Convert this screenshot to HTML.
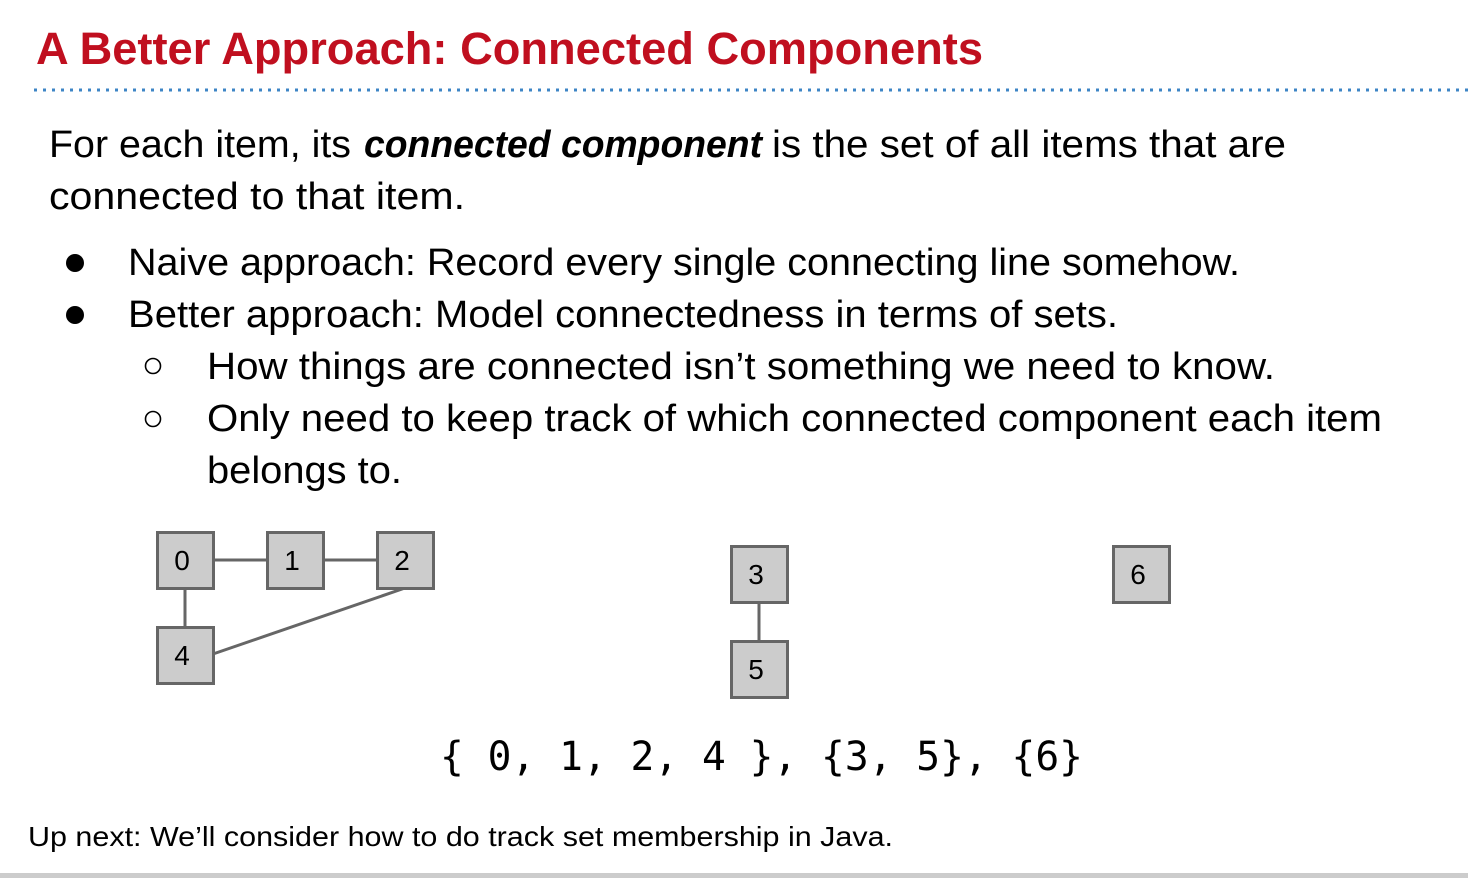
<!DOCTYPE html>
<html><head><meta charset="utf-8"><style>html,body{margin:0;padding:0;background:#fff;}svg{display:block}</style></head>
<body>
<svg width="1468" height="878" viewBox="0 0 1468 878" xmlns="http://www.w3.org/2000/svg">
<rect width="1468" height="878" fill="#fff"/>
<text x="36" y="64" font-family="Liberation Sans, sans-serif" font-weight="bold" font-size="45" fill="#c00f1f" textLength="947" lengthAdjust="spacingAndGlyphs">A Better Approach: Connected Components</text>
<line x1="34" y1="90" x2="1468" y2="90" stroke="#3d85c6" stroke-width="3" stroke-dasharray="3 6"/>
<g font-family="Liberation Sans, sans-serif" font-size="38" fill="#000">
<text x="49" y="157" textLength="302" lengthAdjust="spacingAndGlyphs">For each item, its</text>
<text x="364" y="157" font-weight="bold" font-style="italic" textLength="398" lengthAdjust="spacingAndGlyphs">connected component</text>
<text x="772" y="157" textLength="514" lengthAdjust="spacingAndGlyphs">is the set of all items that are</text>
<text x="49" y="209" textLength="416" lengthAdjust="spacingAndGlyphs">connected to that item.</text>
<text x="128" y="275" textLength="1112" lengthAdjust="spacingAndGlyphs">Naive approach: Record every single connecting line somehow.</text>
<text x="128" y="327" textLength="990" lengthAdjust="spacingAndGlyphs">Better approach: Model connectedness in terms of sets.</text>
<text x="207" y="379" textLength="1068" lengthAdjust="spacingAndGlyphs">How things are connected isn’t something we need to know.</text>
<text x="207" y="431" textLength="1175" lengthAdjust="spacingAndGlyphs">Only need to keep track of which connected component each item</text>
<text x="207" y="483" textLength="195" lengthAdjust="spacingAndGlyphs">belongs to.</text>
</g>
<circle cx="75" cy="263" r="9" fill="#000"/>
<circle cx="75" cy="315" r="9" fill="#000"/>
<circle cx="153" cy="366" r="7.5" fill="none" stroke="#000" stroke-width="1.6"/>
<circle cx="153" cy="419" r="7.5" fill="none" stroke="#000" stroke-width="1.6"/>
<g stroke="#666" stroke-width="3">
<line x1="213" y1="560" x2="267" y2="560"/>
<line x1="323" y1="560" x2="377" y2="560"/>
<line x1="185" y1="588" x2="185" y2="627"/>
<line x1="405" y1="588" x2="213" y2="654"/>
<line x1="759" y1="602" x2="759" y2="641"/>
</g>
<g fill="#ccc" stroke="#666" stroke-width="3">
<rect x="157.5" y="532.5" width="56" height="56"/>
<rect x="267.5" y="532.5" width="56" height="56"/>
<rect x="377.5" y="532.5" width="56" height="56"/>
<rect x="157.5" y="627.5" width="56" height="56"/>
<rect x="731.5" y="546.5" width="56" height="56"/>
<rect x="731.5" y="641.5" width="56" height="56"/>
<rect x="1113.5" y="546.5" width="56" height="56"/>
</g>
<g font-family="Liberation Sans, sans-serif" font-size="28" fill="#000" text-anchor="middle">
<text x="182" y="570">0</text>
<text x="292" y="570">1</text>
<text x="402" y="570">2</text>
<text x="182" y="665">4</text>
<text x="756" y="584">3</text>
<text x="756" y="679">5</text>
<text x="1138" y="584">6</text>
</g>
<text x="440" y="770" font-family="DejaVu Sans Mono, Liberation Mono, monospace" font-size="40" fill="#000" textLength="643" lengthAdjust="spacingAndGlyphs" xml:space="preserve">{ 0, 1, 2, 4 }, {3, 5}, {6}</text>
<text x="28" y="846" font-family="Liberation Sans, sans-serif" font-size="28" fill="#000" textLength="865" lengthAdjust="spacingAndGlyphs">Up next: We’ll consider how to do track set membership in Java.</text>
<rect x="0" y="873" width="1468" height="5" fill="#cccccc"/>
</svg>
</body></html>
